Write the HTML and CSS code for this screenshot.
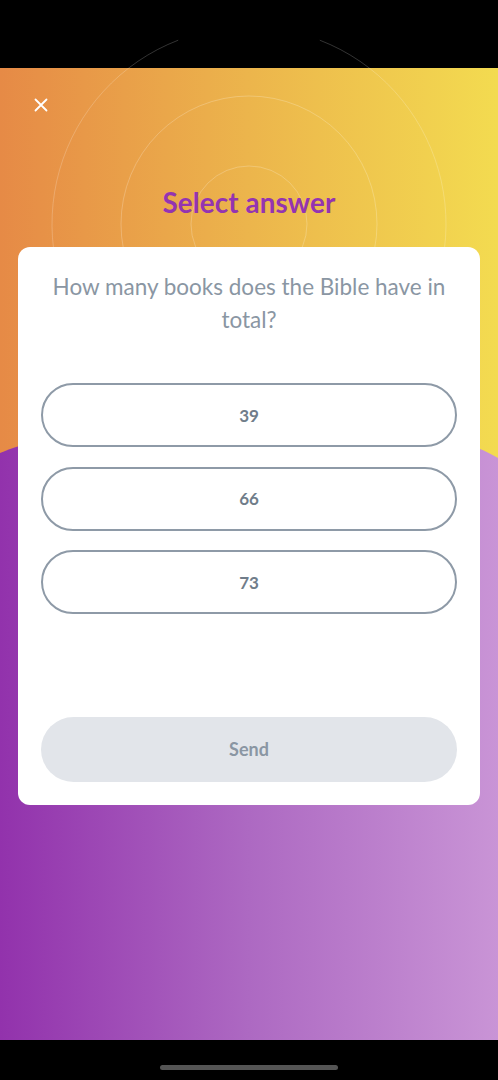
FILE: index.html
```html
<!DOCTYPE html>
<html lang="en">
<head>
<meta charset="utf-8">
<title>Select answer</title>
<link rel="stylesheet" href="styles.css">
</head>
<body>
<div class="screen">
  <div class="statusbar"></div>
  <main class="main">
    <svg class="bg" width="498" height="972" viewBox="0 0 498 972" preserveAspectRatio="none" aria-hidden="true">
      <defs>
        <linearGradient id="og" x1="0" y1="0" x2="1" y2="0">
          <stop offset="0" stop-color="#e68a46"/>
          <stop offset="0.5" stop-color="#ecb54c"/>
          <stop offset="1" stop-color="#f3db50"/>
        </linearGradient>
        <linearGradient id="pg" x1="0" y1="0" x2="1" y2="0">
          <stop offset="0" stop-color="#9232ac"/>
          <stop offset="0.5" stop-color="#ad69c2"/>
          <stop offset="1" stop-color="#c994d6"/>
        </linearGradient>
      </defs>
      <rect x="0" y="0" width="498" height="972" fill="url(#og)"/>
      <path d="M0,385 C90,345 400,330 498,390 L498,972 L0,972 Z" fill="url(#pg)"/>
    </svg>
    <svg class="rings" width="498" height="260" viewBox="0 0 498 260" aria-hidden="true">
      <circle cx="249" cy="224" r="58" fill="none" stroke="rgba(255,255,255,0.22)" stroke-width="1"/>
      <circle cx="249" cy="224" r="128" fill="none" stroke="rgba(255,255,255,0.22)" stroke-width="1"/>
      <path d="M178.2,40.2 A197,197 0 1,0 319.8,40.2" fill="none" stroke="rgba(255,255,255,0.2)" stroke-width="1"/>
    </svg>
    <div class="content">
      <button class="close" aria-label="Close">
        <svg width="14" height="14" viewBox="0 0 14 14"><path d="M1.5 1.5 L12.5 12.5 M12.5 1.5 L1.5 12.5" stroke="#fff" stroke-width="1.8" stroke-linecap="round"/></svg>
      </button>
      <h1 class="title">Select answer</h1>
      <section class="card">
        <p class="question">How many books does the Bible have in total?</p>
        <div class="options">
          <button class="option">39</button>
          <button class="option">66</button>
          <button class="option">73</button>
        </div>
        <button class="send">Send</button>
      </section>
    </div>
  </main>
  <div class="navbar"><span class="home"></span></div>
</div>
</body>
</html>
```
FILE: styles.css
```css
* { box-sizing: border-box; }
html, body { margin: 0; padding: 0; background: #000; }
body { font-family: "Lato", "Open Sans", sans-serif; }
.screen { position: relative; width: 498px; height: 1080px; overflow: hidden; display: flex; flex-direction: column; }
.statusbar { height: 68px; background: #000; flex: none; }
.main { position: relative; height: 972px; flex: none; }
.bg { position: absolute; left: 0; top: 0; display: block; }
.rings { position: absolute; left: 0; top: -68px; display: block; z-index: 2; pointer-events: none; }
.content { position: relative; z-index: 3; display: flex; flex-direction: column; padding: 0 18px; }
.close { align-self: flex-start; margin: 30px 0 0 16px; width: 14px; height: 14px; padding: 0; border: 0; background: none; display: flex; }
.title { margin: 74px 0 27px; text-align: center; font-size: 27.8px; line-height: 34px; font-weight: 700; color: #9434b1; letter-spacing: 0.1px; }
.card { background: #fff; border-radius: 12px; padding: 23px 23px 23px; display: flex; flex-direction: column; height: 558px; }
.question { margin: 0; text-align: center; font-size: 22.5px; line-height: 33px; color: #8a96a3; font-weight: 400; }
.options { margin-top: 47px; display: flex; flex-direction: column; gap: 19.5px; }
.option { height: 64px; border: 2px solid #8e9aa7; border-radius: 32px; background: #fff; font-family: inherit; font-size: 17px; font-weight: 700; color: #707d8a; }
.send { margin-top: auto; height: 65px; border: 0; border-radius: 33px; background: #e2e5ea; font-family: inherit; font-size: 18px; font-weight: 700; color: #8a96a3; padding-bottom: 2px; }
.navbar { height: 40px; background: #000; flex: none; display: flex; justify-content: center; padding-top: 25px; }
.home { width: 178px; height: 5px; border-radius: 3px; background: #555; }
```
